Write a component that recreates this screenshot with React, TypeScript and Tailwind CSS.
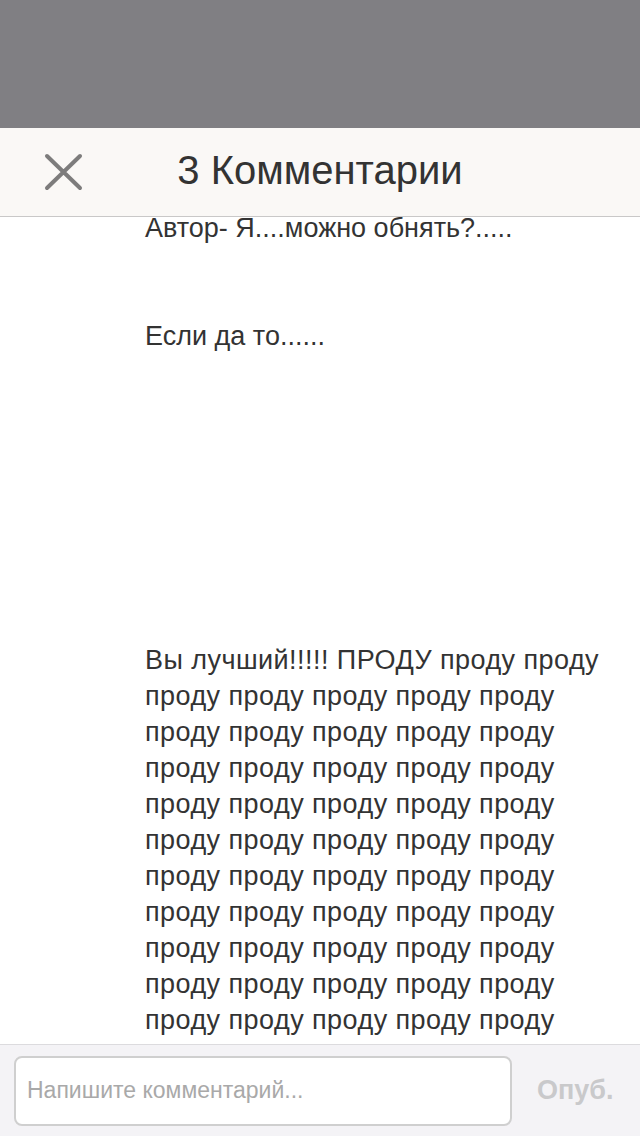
const font = { fontFamily: '"Liberation Sans", Arial, sans-serif' };

const prodLines = [
  'Вы лучший!!!!! ПРОДУ проду проду',
  ...Array(11).fill('проду проду проду проду проду'),
];

export default function App() {
  return (
    <div className="w-[640px] h-[1136px] flex flex-col overflow-hidden bg-white" style={font}>
      {/* dimmed area above sheet */}
      <div className="h-[128px] bg-[#807f83] shrink-0" />

      {/* Header */}
      <div className="relative h-[89px] shrink-0 bg-[#faf8f6] border-b border-[#c9c8c8] flex items-center justify-center">
        <button className="absolute left-[43px] top-[24px] w-[41px] h-[40px]">
          <svg viewBox="0 0 41 40" className="w-full h-full" fill="none" stroke="#7d7c7c" strokeWidth="4" strokeLinecap="round">
            <path d="M4 4 L37 36 M37 4 L4 36" />
          </svg>
        </button>
        <h1 className="text-[40px] text-[#333] -mt-[5px]">
          3 Комментарии
        </h1>
      </div>

      {/* Comment body */}
      <div className="flex-1 overflow-hidden pl-[145px] pr-[20px] text-[27px] leading-[36px] text-[#333]">
        <p className="-mt-[7px]">Автор- Я....можно обнять?.....</p>
        <p className="h-[72px]" />
        <p>Если да то......</p>
        <p className="h-[288px]" />
        {prodLines.map((l, i) => (
          <p key={i} className="whitespace-nowrap tracking-[0.45px]">{l}</p>
        ))}
      </div>

      {/* Footer */}
      <div className="h-[92px] shrink-0 bg-[#f4f3f6] border-t border-[#dcdbde] flex items-center pl-[14px] pr-[26px] gap-[25px]">
        <div className="w-[498px] h-[70px] bg-white border-2 border-[#cfcfcf] rounded-[8px] flex items-center px-[11px]">
          <span className="text-[23px] text-[#a9a9a9]">Напишите комментарий...</span>
        </div>
        <span className="text-[27px] font-bold text-[#c9c9cb]">Опуб.</span>
      </div>
    </div>
  );
}
